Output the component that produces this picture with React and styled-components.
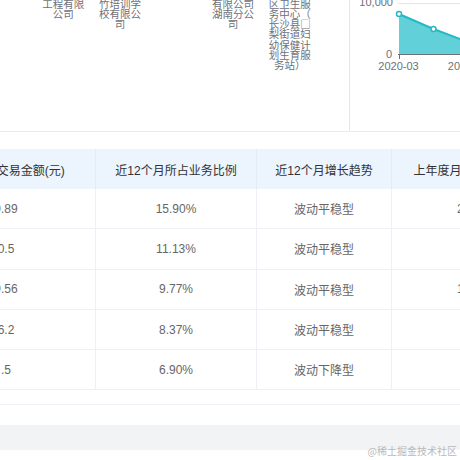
import React from "react";
import styled, { createGlobalStyle } from "styled-components";

const GlobalStyle = createGlobalStyle`
  html, body {
    margin: 0;
    padding: 0;
    background: #fff;
    width: 460px;
    height: 460px;
    overflow: hidden;
  }
  body {
    font-family: "Liberation Sans", "Noto Sans CJK SC", sans-serif;
  }
`;

const labels = [
  ["工程有限", "公司"],
  ["竹培训学", "校有限公", "司"],
  [],
  ["有限公司", "湖南分公", "司"],
  ["区卫生服", "务中心（", "长沙县□", "梨街道妇", "幼保健计", "划生育服", "务站）"],
];

const rows = [
  { amount: "9.89", ratio: "15.90%", trend: "波动平稳型", last: "2" },
  { amount: "0.5", ratio: "11.13%", trend: "波动平稳型", last: "" },
  { amount: "9.56", ratio: "9.77%", trend: "波动平稳型", last: "1" },
  { amount: "6.2", ratio: "8.37%", trend: "波动平稳型", last: "" },
  { amount: ".5", ratio: "6.90%", trend: "波动下降型", last: "" },
];

const COLS = "179px 161px 135px 172px";

const App = () => {
  return (
    <Page>
      <GlobalStyle />
      <Card>
        <TopPanel>
          <BarLabels>
            {labels.map((lines, i) => (
              <LabelCol key={i}>
                {lines.map((l, j) => (
                  <LabelLine key={j}>{l}</LabelLine>
                ))}
              </LabelCol>
            ))}
          </BarLabels>
          <ChartBox>
            <TrendChart />
          </ChartBox>
        </TopPanel>

        <TableWrap>
          <HeadRow>
            <HeadCell>近12个月交易金额(元)</HeadCell>
            <HeadCell>近12个月所占业务比例</HeadCell>
            <HeadCell>近12个月增长趋势</HeadCell>
            <HeadCell>上年度月均交易金额(元)</HeadCell>
          </HeadRow>
          {rows.map((r, i) => (
            <BodyRow key={i}>
              <Cell>{r.amount}</Cell>
              <Cell>{r.ratio}</Cell>
              <Cell>{r.trend}</Cell>
              <Cell $align="left">{r.last}</Cell>
            </BodyRow>
          ))}
        </TableWrap>
      </Card>
      <FooterStrip />
      <GrayGap />
      <NextCard />
      <Watermark>@稀土掘金技术社区</Watermark>
    </Page>
  );
};

const TrendChart = () => (
  <svg width="110" height="131" viewBox="0 0 110 131">
    <line x1="48" y1="3.5" x2="110" y2="3.5" stroke="#e0e6f1" strokeWidth="1" />
    <text x="43" y="6" textAnchor="end" fontSize="11" fill="#6e7079" fontFamily="Liberation Sans, sans-serif">
      10,000
    </text>
    <text x="42" y="58" textAnchor="end" fontSize="11" fill="#6e7079" fontFamily="Liberation Sans, sans-serif">
      0
    </text>
    <path d="M49 14 L83.5 29 L118 42 L118 54 L49 54 Z" fill="#62d0d8" />
    <path d="M49 14 L83.5 29 L118 42" fill="none" stroke="#26b8c3" strokeWidth="2" />
    <line x1="48" y1="54.5" x2="110" y2="54.5" stroke="#6e7079" strokeWidth="1" />
    <line x1="49.5" y1="54" x2="49.5" y2="59" stroke="#6e7079" strokeWidth="1" />
    <circle cx="49" cy="14" r="2.5" fill="#fff" stroke="#26b8c3" strokeWidth="1.5" />
    <circle cx="83.5" cy="29" r="2.5" fill="#fff" stroke="#26b8c3" strokeWidth="1.5" />
    <text x="48.5" y="70" textAnchor="middle" fontSize="11" fill="#6e7079" fontFamily="Liberation Sans, sans-serif">
      2020-03
    </text>
    <text x="118" y="70" textAnchor="middle" fontSize="11" fill="#6e7079" fontFamily="Liberation Sans, sans-serif">
      2020-05
    </text>
  </svg>
);

const Page = styled.div`
  position: relative;
  width: 460px;
  height: 460px;
  overflow: hidden;
  background: #fff;
`;

const Card = styled.div`
  background: #fff;
  padding-bottom: 14px;
  border-bottom: 1px solid #eef0f5;
`;

const TopPanel = styled.div`
  display: flex;
  height: 131px;
  border-bottom: 1px solid #ebebeb;
`;

const BarLabels = styled.div`
  width: 350px;
  flex: none;
  display: flex;
  padding-left: 35px;
  box-sizing: border-box;
  border-right: 1px solid #e6e6e6;
  overflow: hidden;
`;

const LabelCol = styled.div`
  width: 56.6px;
  flex: none;
  margin-top: -1.5px;
  text-align: center;
  font-family: "Noto Sans CJK SC", sans-serif;
  font-size: 10.5px;
  line-height: 10.3px;
  color: #6e7079;
`;

const LabelLine = styled.div`
  white-space: nowrap;
`;

const ChartBox = styled.div`
  flex: 1;
  overflow: hidden;
`;

const TableWrap = styled.div`
  margin-top: 17px;
  margin-left: -83px;
  width: 660px;
`;

const HeadRow = styled.div`
  display: grid;
  grid-template-columns: ${COLS};
  height: 40px;
  background: #ecf4fe;
`;

const HeadCell = styled.div`
  display: flex;
  align-items: center;
  justify-content: center;
  white-space: nowrap;
  font-size: 12px;
  color: #333;
  border-right: 1px solid #e2ebf7;
`;

const BodyRow = styled.div`
  display: grid;
  grid-template-columns: ${COLS};
  height: 40.3px;
  box-sizing: border-box;
  border-bottom: 1px solid #eef0f6;
`;

const Cell = styled.div`
  display: flex;
  align-items: center;
  justify-content: ${(p) => (p.$align === "left" ? "flex-start" : "center")};
  padding-left: ${(p) => (p.$align === "left" ? "65px" : "0")};
  font-size: 12px;
  color: #666;
  border-right: 1px solid #eef0f6;
`;

const FooterStrip = styled.div`
  height: 20px;
  background: #fff;
`;

const GrayGap = styled.div`
  height: 25px;
  background: #f2f3f5;
`;

const NextCard = styled.div`
  height: 20px;
  background: #fff;
`;

const Watermark = styled.div`
  position: absolute;
  right: 3px;
  top: 443px;
  font-family: "Noto Sans CJK SC", serif;
  font-size: 10px;
  color: #b9b9b9;
  white-space: nowrap;
`;

export default App;
